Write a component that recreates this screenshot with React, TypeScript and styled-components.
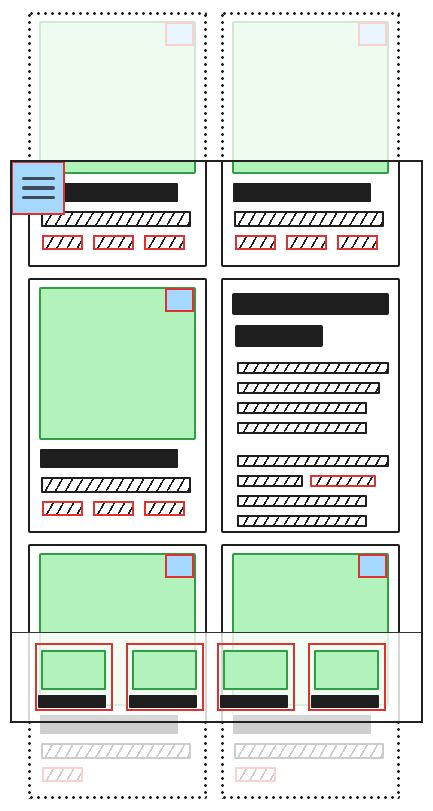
import { FC } from "react";
import styled, { createGlobalStyle, css } from "styled-components";

const ink = "#1e1e1e";
const red = "#e03131";
const green = "#2f9e44";
const greenFill = "#b2f2bb";
const blueFill = "#a5d8ff";

// diagonal "/" hatching used by the placeholder text bars
const hatch = (color: string) =>
  `repeating-linear-gradient(120deg, transparent 0 7.2px, ${color} 7.2px 8.8px)`;

const dot = `radial-gradient(circle, ${ink} 1.1px, transparent 1.6px)`;

const GlobalStyle = createGlobalStyle`
  html, body {
    margin: 0;
    padding: 0;
    background: #fff;
  }
  body {
    font-family: "Liberation Sans", Arial, sans-serif;
    overflow: hidden;
  }
`;

const Page = styled.div`
  position: relative;
  width: 433px;
  height: 811px;
  overflow: hidden;
  box-sizing: border-box;
  padding: 12px 0 0 28px;
`;

const FeedGrid = styled.div<{ $offset?: number }>`
  display: grid;
  grid-template-columns: 179px 179px;
  grid-auto-rows: 255px;
  column-gap: 14px;
  row-gap: 11px;
  margin-top: ${(p) => p.$offset ?? 0}px;
`;

const Card = styled.div<{ $ghost?: boolean; $text?: boolean }>`
  box-sizing: border-box;
  display: flex;
  flex-direction: column;
  padding: ${(p) => (p.$text ? "13px 9px" : "7px 9px 15px")};
  border: 2px solid ${(p) => (p.$ghost ? "transparent" : ink)};
  border-radius: 2px;
  background: #fff;

  ${(p) =>
    p.$ghost &&
    css`
      background: ${dot} left top / 7px 3px repeat-x,
        ${dot} left bottom / 7px 3px repeat-x,
        ${dot} left top / 3px 7px repeat-y,
        ${dot} right top / 3px 7px repeat-y;
      background-origin: border-box;

      & > * {
        opacity: 0.22;
      }
    `}
`;

const Photo = styled.div`
  position: relative;
  flex-shrink: 0;
  height: 153px;
  box-sizing: border-box;
  border: 2px solid ${green};
  border-radius: 2px;
  background: ${greenFill};
`;

const Badge = styled.span`
  position: absolute;
  top: -1px;
  right: 0;
  width: 29px;
  height: 24px;
  box-sizing: border-box;
  border: 2px solid ${red};
  background: ${blueFill};
`;

const TitleBar = styled.div`
  margin: 9px 0 0 1px;
  width: 138px;
  height: 20px;
  background: ${ink};
  border-radius: 1px;
`;

const HatchBar = styled.div`
  margin: 9px 0 0 2px;
  width: 150px;
  height: 16px;
  box-sizing: border-box;
  border: 2px solid ${ink};
  border-radius: 1px;
  background: ${hatch(ink)};
`;

const PillRow = styled.div`
  display: flex;
  gap: 10px;
  margin: 8px 0 0 3px;
`;

const Pill = styled.span`
  width: 41px;
  height: 15px;
  box-sizing: border-box;
  border: 2px solid ${red};
  background: ${hatch(ink)};
`;

const Heading = styled.div<{ $w: number; $indent?: number }>`
  width: ${(p) => p.$w}px;
  height: 22px;
  margin-left: ${(p) => p.$indent ?? 0}px;
  background: ${ink};
  border-radius: 2px;

  & + & {
    margin-top: 10px;
  }
`;

const LineGroup = styled.div<{ $space: number }>`
  display: flex;
  flex-direction: column;
  gap: 8px;
  margin: ${(p) => p.$space}px 0 0 5px;
`;

const LineRow = styled.div`
  display: flex;
  gap: 7px;
`;

const Line = styled.span<{ $w: number; $accent?: boolean }>`
  display: block;
  width: ${(p) => p.$w}px;
  height: 12px;
  box-sizing: border-box;
  border: 2px solid ${(p) => (p.$accent ? red : ink)};
  border-radius: 1px;
  background: ${hatch(ink)};
`;

const Viewport = styled.section`
  position: absolute;
  left: 10px;
  top: 160px;
  width: 413px;
  height: 563px;
  box-sizing: border-box;
  border: 2px solid #222;
  background: #fff;
  overflow: hidden;
  padding-left: 16px;
`;

const MenuButton = styled.button`
  position: absolute;
  left: -1px;
  top: -1px;
  width: 54px;
  height: 54px;
  padding: 0;
  box-sizing: border-box;
  border: 2px solid ${red};
  background: ${blueFill};
  display: flex;
  flex-direction: column;
  align-items: center;
  justify-content: center;
  gap: 6px;
`;

const MenuLine = styled.span`
  width: 33px;
  height: 3.4px;
  border-radius: 2px;
  background: #3f4b58;
`;

const BottomNav = styled.nav`
  position: absolute;
  left: 0;
  right: 0;
  bottom: 0;
  height: 89px;
  box-sizing: border-box;
  border-top: 1.5px solid #333;
  background: rgba(255, 255, 255, 0.82);
  display: flex;
  gap: 13px;
  padding: 10px 0 0 23px;
`;

const NavItem = styled.div`
  width: 78px;
  height: 68px;
  box-sizing: border-box;
  border: 2px solid ${red};
  padding: 5px 5px 1px 1px;
  display: flex;
  flex-direction: column;
  gap: 5px;
`;

const NavThumb = styled.div`
  width: 65px;
  height: 40px;
  margin-left: 3px;
  box-sizing: border-box;
  border: 2px solid ${green};
  border-radius: 1px;
  background: ${greenFill};
`;

const NavLabel = styled.div`
  height: 13px;
  background: ${ink};
  border-radius: 1px;
`;

type CardSpec = { kind: "product"; pills: number } | { kind: "text" };

const cards: CardSpec[] = [
  { kind: "product", pills: 3 },
  { kind: "product", pills: 3 },
  { kind: "product", pills: 3 },
  { kind: "text" },
  { kind: "product", pills: 1 },
  { kind: "product", pills: 1 },
];

const ProductCard: FC<{ ghost?: boolean; pills: number }> = ({ ghost, pills }) => (
  <Card $ghost={ghost}>
    <Photo>
      <Badge />
    </Photo>
    <TitleBar />
    <HatchBar />
    <PillRow>
      {Array.from({ length: pills }, (_, i) => (
        <Pill key={i} />
      ))}
    </PillRow>
  </Card>
);

const TextCard: FC<{ ghost?: boolean }> = ({ ghost }) => (
  <Card $ghost={ghost} $text>
    <div>
      <Heading $w={157} />
      <Heading $w={88} $indent={3} />
    </div>
    <LineGroup $space={15}>
      <Line $w={152} />
      <Line $w={143} />
      <Line $w={130} />
      <Line $w={130} />
    </LineGroup>
    <LineGroup $space={21}>
      <Line $w={152} />
      <LineRow>
        <Line $w={66} />
        <Line $w={66} $accent />
      </LineRow>
      <Line $w={130} />
      <Line $w={130} />
    </LineGroup>
  </Card>
);

const Feed: FC<{ ghost?: boolean; offset?: number }> = ({ ghost, offset }) => (
  <FeedGrid $offset={offset}>
    {cards.map((c, i) =>
      c.kind === "text" ? (
        <TextCard key={i} ghost={ghost} />
      ) : (
        <ProductCard key={i} ghost={ghost} pills={c.pills} />
      )
    )}
  </FeedGrid>
);

const App: FC = () => {
  return (
    <>
      <GlobalStyle />
      <Page>
        <Feed ghost />
        <Viewport>
          <Feed offset={-150} />
          <MenuButton aria-label="menu">
            <MenuLine />
            <MenuLine />
            <MenuLine />
          </MenuButton>
          <BottomNav>
            {[0, 1, 2, 3].map((n) => (
              <NavItem key={n}>
                <NavThumb />
                <NavLabel />
              </NavItem>
            ))}
          </BottomNav>
        </Viewport>
      </Page>
    </>
  );
};

export default App;
